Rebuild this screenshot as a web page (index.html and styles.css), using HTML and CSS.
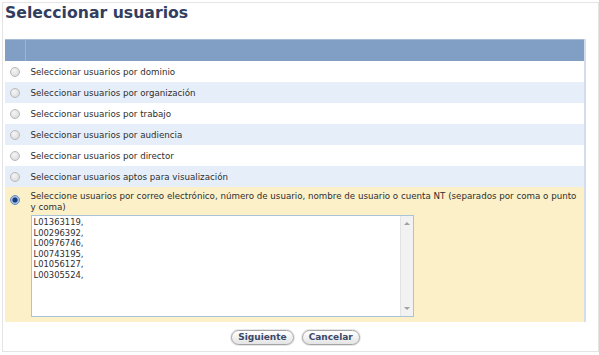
FILE: index.html
```html
<!DOCTYPE html>
<html lang="es">
<head>
    <meta charset="UTF-8">
    <meta name="viewport" content="width=device-width, initial-scale=1.0">
    <title>Seleccionar usuarios</title>
    <link rel="stylesheet" href="styles.css">
</head>
<body>
    <div class="panel">
        <h1 class="title">Seleccionar usuarios</h1>

        <table class="picker">
            <thead>
                <tr>
                    <th class="col-radio"></th>
                    <th></th>
                </tr>
            </thead>
            <tbody>
                <tr>
                    <td class="col-radio"><span class="radio"></span></td>
                    <td>Seleccionar usuarios por dominio</td>
                </tr>
                <tr class="alt">
                    <td class="col-radio"><span class="radio"></span></td>
                    <td>Seleccionar usuarios por organización</td>
                </tr>
                <tr>
                    <td class="col-radio"><span class="radio"></span></td>
                    <td>Seleccionar usuarios por trabajo</td>
                </tr>
                <tr class="alt">
                    <td class="col-radio"><span class="radio"></span></td>
                    <td>Seleccionar usuarios por audiencia</td>
                </tr>
                <tr>
                    <td class="col-radio"><span class="radio"></span></td>
                    <td>Seleccionar usuarios por director</td>
                </tr>
                <tr class="alt">
                    <td class="col-radio"><span class="radio"></span></td>
                    <td>Seleccionar usuarios aptos para visualización</td>
                </tr>
                <tr class="active">
                    <td class="col-radio"><span class="radio checked"></span></td>
                    <td>
                        <div class="prompt">Seleccione usuarios por correo electrónico, número de usuario, nombre de usuario o cuenta NT (separados por coma o punto y coma)</div>
                        <div class="entry-box">
                            <textarea class="entry">L01363119,
L00296392,
L00976746,
L00743195,
L01056127,
L00305524,</textarea>
                            <div class="scrollbar">
                                <span class="arrow up"></span>
                                <span class="arrow down"></span>
                            </div>
                        </div>
                    </td>
                </tr>
            </tbody>
        </table>

        <div class="actions">
            <button class="btn">Siguiente</button>
            <button class="btn">Cancelar</button>
        </div>
    </div>
</body>
</html>
```

FILE: styles.css
```css
body {
    margin: 0;
    font-family: "DejaVu Sans", Verdana, sans-serif;
    background: #ffffff;
}
.panel {
    margin: 2px;
    width: 591px;
    height: 348px;
    padding: 0 2px;
    border: 1px solid #e4e4e4;
    background: white;
}
.title {
    margin: 0 0 16px 0;
    height: 20px;
    line-height: 20px;
    font-size: 15.7px;
    font-weight: bold;
    color: #313e5f;
}
.picker {
    width: 581px;
    border-collapse: collapse;
    font-size: 8.7px;
    color: #2e2e2e;
    border-right: 2px solid #d3deec;
}
.picker th {
    height: 21px;
    padding: 0;
    background: #819fc4;
    border-top: 1px solid #a7bcd6;
}
.picker th.col-radio {
    border-right: 1px solid #9fb5d2;
}
.col-radio {
    width: 20px;
    text-align: center;
}
.picker td {
    height: 21px;
    padding: 0;
    vertical-align: middle;
}
.picker td + td {
    padding-left: 5px;
}
.picker tr.alt td {
    background: #e6eef9;
}
.picker tr.active td {
    background: #fcf0c8;
    vertical-align: top;
    padding-top: 4px;
    padding-bottom: 5px;
}
.picker tr.active td.col-radio {
    padding-top: 5px;
}
.radio {
    display: inline-block;
    width: 8px;
    height: 8px;
    margin-top: 3px;
    border: 1px solid #b9b9b9;
    border-radius: 50%;
    background: radial-gradient(circle at 40% 35%, #f6f6f6, #d4d4d4);
}
.radio.checked {
    border-color: #6d8fbf;
    background: radial-gradient(circle, #1b3b7a 0, #1b3b7a 2px, #8fb0de 3px, #d8e4f4 5px);
}
.prompt {
    line-height: 11px;
    padding-right: 6px;
}
.entry-box {
    display: flex;
    width: 381px;
    height: 100px;
    margin-top: 2px;
    border: 1px solid #a9c3d9;
    background: white;
}
.entry {
    flex: 1;
    margin: 0;
    padding: 1px 2px;
    border: none;
    resize: none;
    outline: none;
    overflow: hidden;
    font-family: "DejaVu Sans", Verdana, sans-serif;
    font-size: 8.4px;
    line-height: 10.5px;
    color: #2e2e2e;
}
.scrollbar {
    display: flex;
    flex-direction: column;
    justify-content: space-between;
    align-items: center;
    width: 12px;
    padding: 6px 0;
    background: #f2f2f2;
    border-left: 1px solid #e3e3e3;
}
.arrow {
    width: 0;
    height: 0;
    border-left: 3px solid transparent;
    border-right: 3px solid transparent;
}
.arrow.up {
    border-bottom: 3px solid #a0a0a0;
}
.arrow.down {
    border-top: 3px solid #a0a0a0;
}
.actions {
    width: 581px;
    display: flex;
    justify-content: center;
    gap: 8px;
    padding-top: 8px;
}
.btn {
    height: 15px;
    padding: 0 6px;
    border: 1px solid #a4a4a4;
    border-radius: 8px;
    background: linear-gradient(#ffffff, #e4e4e4);
    box-shadow: 0 0 0 1px #e6e6e6;
    font-family: "DejaVu Sans", Verdana, sans-serif;
    font-size: 9px;
    font-weight: bold;
    color: #3a4868;
    line-height: 13px;
}
```
